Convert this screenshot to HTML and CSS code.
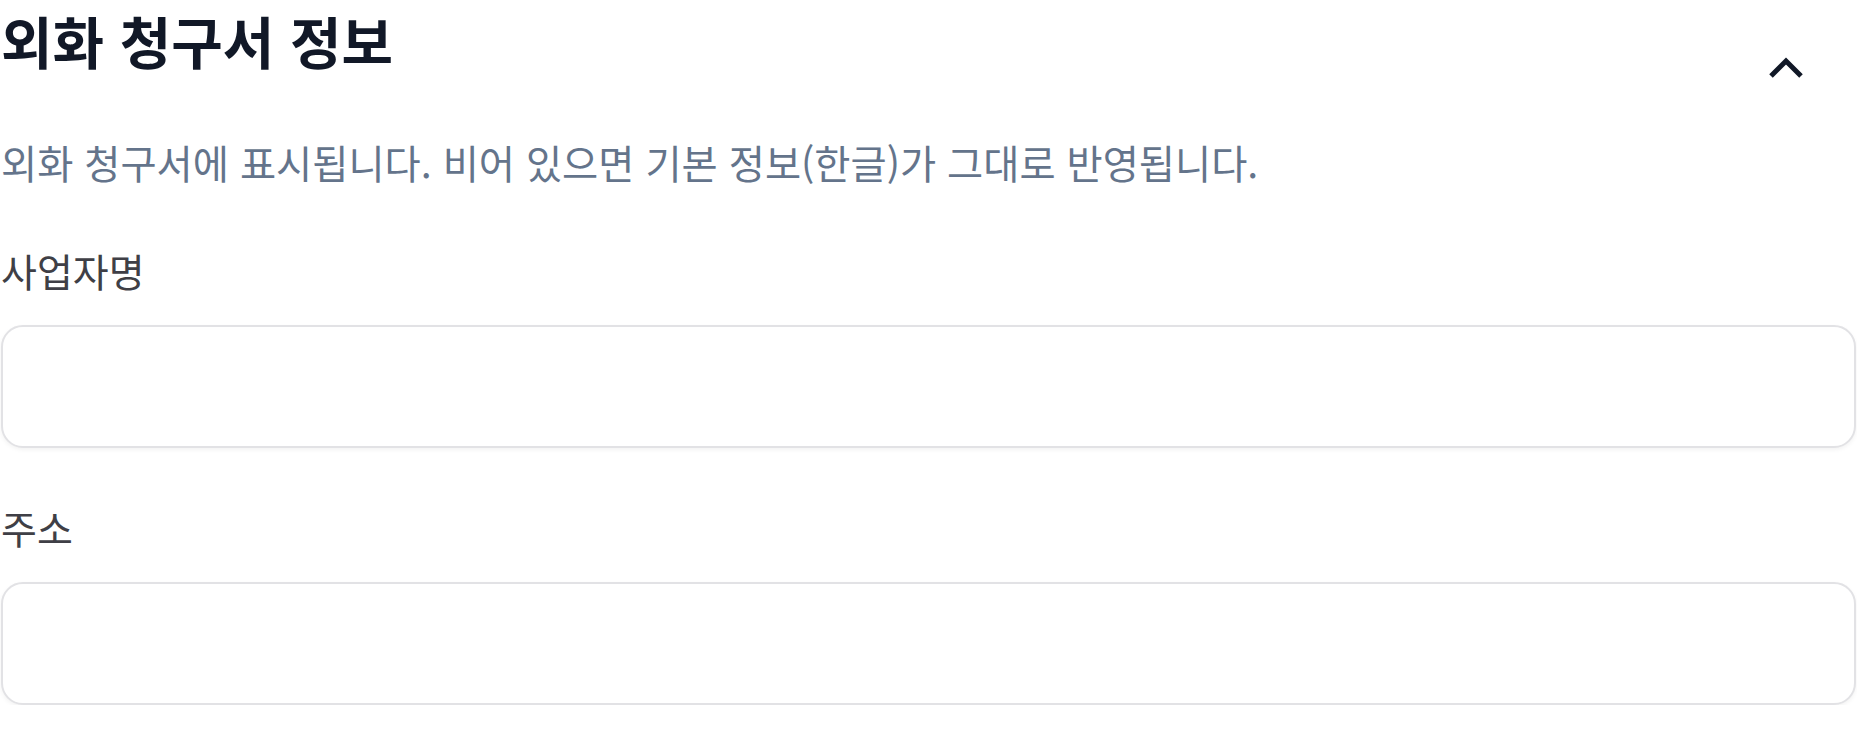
FILE: index.html
```html
<!doctype html>
<html lang="ko">
<head>
    <meta charset="utf-8">
    <title>외화 청구서 정보</title>
    <link rel="stylesheet" href="styles.css">
</head>

<body>
    <section class="panel">
        <div class="panel-head">
            <h2 class="panel-title">외화 청구서 정보</h2>
            <button class="toggle" type="button" aria-label="접기">
                <svg width="40" height="24" viewBox="0 0 40 24">
                    <path d="M5 20 L20 5 L35 20" fill="none" stroke="#111827" stroke-width="5" stroke-linejoin="miter"/>
                </svg>
            </button>
        </div>
        <p class="panel-desc">외화 청구서에 표시됩니다. 비어 있으면 기본 정보(한글)가 그대로 반영됩니다.</p>

        <!-- business name -->
        <div class="field">
            <label class="field-label" for="bizname">사업자명</label>
            <input class="field-input" id="bizname" type="text">
        </div>
        <!-- address -->
        <div class="field">
            <label class="field-label" for="addr">주소</label>
            <input class="field-input" id="addr" type="text">
        </div>
    </section>
</body>

</html>
```

FILE: styles.css
```css
html, body {
    margin: 0;
    background-color: white;
    font-family: "Noto Sans CJK KR", "Noto Sans", sans-serif;
}

.panel {
    padding: 0 1px;
}

.panel-head {
    display: flex;
    justify-content: space-between;
    align-items: flex-start;
}

.panel-title {
    margin: 0;
    font-size: 56px;
    line-height: 80px;
    font-weight: 700;
    color: #111827;
}

.toggle {
    margin: 56px 50px 0 0;
    padding: 0;
    border: none;
    background: none;
    cursor: pointer;
}

.panel-desc {
    margin: 53px 0 56px;
    font-size: 39.3px;
    line-height: 52px;
    color: #64748b;
}

.field {
    margin-top: 53px;
}

.field-label {
    display: block;
    font-size: 39px;
    line-height: 52px;
    color: #3f3f46;
}

.field-input {
    display: block;
    box-sizing: border-box;
    width: 100%;
    height: 123px;
    margin-top: 29px;
    border: 2.5px solid #e2e2e5;
    border-radius: 22px;
    background-color: white;
    box-shadow: 0 2px 4px rgba(0, 0, 0, 0.05);
}
```
